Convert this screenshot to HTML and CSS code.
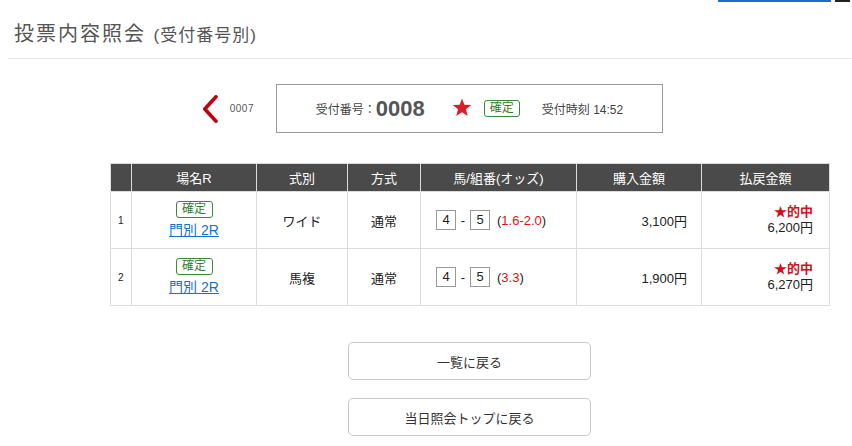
FILE: index.html
```html
<!DOCTYPE html>
<html lang="ja">
<head>
<meta charset="utf-8">
<link rel="stylesheet" href="styles.css">
</head>
<body>
<div class="topbar"><span class="toplink"></span><span class="topmark"></span></div>
<header class="page-head">
  <h1 class="title">投票内容照会 <span class="sub">(受付番号別)</span></h1>
</header>
<main class="main">
  <div class="nav-row">
    <div class="nav-prev">
      <svg class="chev" width="18" height="28" viewBox="0 0 18 28"><path d="M15 1.8 L3.8 14 L15 26.2" fill="none" stroke="#c00010" stroke-width="3.6" stroke-linecap="round" stroke-linejoin="round"/></svg>
      <span class="prev-no">0007</span>
    </div>
    <div class="receipt">
      <span class="r-label">受付番号：</span><span class="r-no">0008</span>
      <svg class="r-star" width="20" height="19" viewBox="0 0 24 23"><path d="M12 0.5 L14.9 8.2 L23.3 8.5 L16.7 13.6 L19 21.8 L12 17.1 L5 21.8 L7.3 13.6 L0.7 8.5 L9.1 8.2 Z" fill="#d81e2c"/></svg>
      <span class="badge">確定</span>
      <span class="r-time">受付時刻 14:52</span>
    </div>
    <div></div>
  </div>

  <table class="bets">
    <thead>
      <tr>
        <th class="c-no"></th>
        <th class="c-place">場名R</th>
        <th class="c-type">式別</th>
        <th class="c-method">方式</th>
        <th class="c-horse">馬/組番(オッズ)</th>
        <th class="c-buy">購入金額</th>
        <th class="c-pay">払戻金額</th>
      </tr>
    </thead>
    <tbody>
      <tr>
        <td class="c-no">1</td>
        <td class="c-place"><span class="badge">確定</span><a class="race" href="#">門別 2R</a></td>
        <td class="center">ワイド</td>
        <td class="center">通常</td>
        <td class="horse"><span class="hb">4</span><span class="dash">-</span><span class="hb">5</span><span class="odds">(<em>1.6-2.0</em>)</span></td>
        <td class="amount">3,100円</td>
        <td class="amount pay"><span class="hit">★的中</span><span>6,200円</span></td>
      </tr>
      <tr>
        <td class="c-no">2</td>
        <td class="c-place"><span class="badge">確定</span><a class="race" href="#">門別 2R</a></td>
        <td class="center">馬複</td>
        <td class="center">通常</td>
        <td class="horse"><span class="hb">4</span><span class="dash">-</span><span class="hb">5</span><span class="odds">(<em>3.3</em>)</span></td>
        <td class="amount">1,900円</td>
        <td class="amount pay"><span class="hit">★的中</span><span>6,270円</span></td>
      </tr>
    </tbody>
  </table>

  <div class="actions">
    <a class="btn" href="#">一覧に戻る</a>
    <a class="btn" href="#">当日照会トップに戻る</a>
  </div>
</main>
</body>
</html>
```
FILE: styles.css
```css
* { box-sizing: border-box; }
html, body { margin: 0; padding: 0; background: #fff; }
body {
  width: 852px;
  font-family: "Liberation Sans", "Noto Sans CJK JP", sans-serif;
  color: #222;
  font-size: 13px;
  overflow: hidden;
}
.topbar {
  height: 4px;
  display: flex;
  justify-content: flex-end;
  align-items: flex-start;
  gap: 4px;
  padding-right: 2px;
}
.toplink { display: block; width: 113px; height: 2px; background: #1a6ecc; }
.topmark { display: block; width: 15px; height: 2px; background: #222; }

.page-head {
  margin-left: 8px;
  padding: 16px 0 8px 6px;
  border-bottom: 1px solid #e6e6e6;
}
.title {
  margin: 0;
  font-weight: normal;
  font-size: 20px;
  line-height: 28px;
  color: #555;
  letter-spacing: 2px;
}
.title .sub { font-size: 17px; letter-spacing: 1px; }

.main {
  margin-left: 110px;
  width: 719px;
}
.nav-row {
  display: grid;
  grid-template-columns: 1fr auto 1fr;
  align-items: center;
  margin-top: 25px;
}
.nav-prev {
  display: flex;
  align-items: center;
  justify-content: flex-end;
  gap: 11px;
  padding-right: 22px;
}
.chev { display: block; }
.prev-no { font-size: 10px; color: #555; letter-spacing: 0.5px; }
.receipt {
  width: 387px;
  height: 49px;
  border: 1px solid #9a9a9a;
  display: flex;
  align-items: center;
  justify-content: center;
  color: #444;
}
.r-label { font-size: 12px; }
.r-no { font-size: 22px; font-weight: bold; color: #555; margin-right: 27px; }
.r-star { margin-right: 12px; margin-top: -2px; }
.r-time { font-size: 12px; margin-left: 22px; }

.badge {
  display: inline-block;
  border: 1px solid #3b8a3b;
  border-radius: 3px;
  color: #2e7d32;
  font-size: 12px;
  line-height: 15px;
  padding: 0 5px;
  background: #fff;
}

.bets {
  width: 719px;
  margin-top: 30px;
  border-collapse: collapse;
  table-layout: fixed;
}
.bets th, .bets td { border: 1px solid #dcdcdc; }
.bets th {
  background: #4a4a4a;
  color: #fff;
  font-weight: normal;
  font-size: 13px;
  height: 28px;
  padding: 0;
}
.bets td { height: 57px; padding: 0; vertical-align: middle; }
.c-no { width: 21px; }
.c-place { width: 125px; }
.c-type { width: 91px; }
.c-method { width: 73px; }
.c-horse { width: 156px; }
.c-buy { width: 125px; }
.c-pay { width: 128px; }
td.c-no { font-size: 10px; padding-left: 7px; }
td.c-place { text-align: center; }
td.c-place .badge { display: block; width: 37px; margin: 0 auto 4px; }
.race { color: #1a6ecc; font-size: 14px; text-decoration: underline; display: inline-block; line-height: 17px; }
.center { text-align: center; }
.horse { padding-left: 15px !important; white-space: nowrap; }
.hb {
  display: inline-block;
  width: 20px;
  height: 20px;
  border: 1px solid #999;
  text-align: center;
  line-height: 18px;
  font-size: 13px;
  vertical-align: middle;
}
.dash { display: inline-block; width: 14px; text-align: center; vertical-align: middle; }
.odds { margin-left: 7px; vertical-align: middle; }
.odds em { font-style: normal; color: #e61010; }
.amount { text-align: right; padding-right: 14px !important; }
.pay { padding-right: 16px !important; }
.pay span { display: block; line-height: 16px; }
.hit { color: #d01020; font-weight: bold; font-size: 13px; }

.actions {
  display: flex;
  flex-direction: column;
  align-items: center;
  gap: 18px;
  margin-top: 36px;
}
.btn {
  display: flex;
  align-items: center;
  justify-content: center;
  width: 243px;
  height: 38px;
  border: 1px solid #c8c8c8;
  border-radius: 5px;
  color: #333;
  text-decoration: none;
  font-size: 13px;
}
```
